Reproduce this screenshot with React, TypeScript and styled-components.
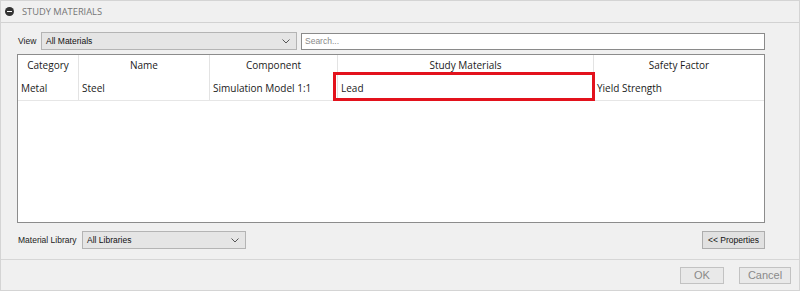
import React from 'react';
import styled, { createGlobalStyle } from 'styled-components';

const GlobalStyle = createGlobalStyle`
  html, body {
    margin: 0;
    padding: 0;
    background: #f0f0f0;
  }
  * {
    box-sizing: border-box;
  }
`;

const Panel = styled.div`
  width: 800px;
  height: 291px;
  background: #f0f0f0;
  border: 1px solid #d4d4d4;
  display: flex;
  flex-direction: column;
  font-family: 'Open Sans', 'Noto Sans', sans-serif;
`;

const TitleBar = styled.div`
  height: 22px;
  flex: none;
  display: flex;
  align-items: center;
  gap: 8px;
  padding-left: 4px;
  border-bottom: 1px solid #d2d2d2;
`;

const CollapseIcon = styled.span`
  width: 9px;
  height: 9px;
  border-radius: 50%;
  background: #333;
  position: relative;
  &::after {
    content: '';
    position: absolute;
    left: 2px;
    right: 2px;
    top: 4px;
    height: 1px;
    background: #fff;
  }
`;

const Title = styled.span`
  font-size: 9.3px;
  color: #757575;
`;

const Body = styled.div`
  flex: 1;
  display: flex;
  flex-direction: column;
  padding: 9px 34px 0 16px;
`;

const Row = styled.div<{ $top?: number }>`
  display: flex;
  align-items: center;
  margin-top: ${({ $top }) => $top ?? 0}px;
`;

const SmallLabel = styled.span<{ $width: number }>`
  width: ${({ $width }) => $width}px;
  flex: none;
  font-family: 'Liberation Sans', Arial, sans-serif;
  font-size: 8.5px;
  color: #222;
  padding-left: 1px;
`;

const Dropdown = styled.div<{ $width: number }>`
  width: ${({ $width }) => $width}px;
  height: 18px;
  flex: none;
  display: flex;
  align-items: center;
  justify-content: space-between;
  padding: 0 6px 0 4px;
  background: #e5e5e5;
  border: 1px solid #b4b4b4;
  font-family: 'Liberation Sans', Arial, sans-serif;
  font-size: 8.5px;
  color: #111;
`;

const SearchBox = styled.div`
  flex: 1;
  height: 17px;
  margin-left: 4px;
  display: flex;
  align-items: center;
  padding-left: 3px;
  background: #fff;
  border: 1px solid #8a8a8a;
  font-family: 'Liberation Sans', Arial, sans-serif;
  font-size: 8.5px;
  color: #8a8a8a;
`;

const Table = styled.div`
  margin-top: 4px;
  height: 169px;
  background: #fff;
  border: 1px solid #8c8c8c;
  position: relative;
`;

const Grid = styled.div`
  display: grid;
  grid-template-columns: 61px 131px 128px 256px 1fr;
  border-bottom: 1px solid #e6e6e6;
`;

const HeadCell = styled.div<{ $last?: boolean }>`
  height: 20px;
  display: flex;
  align-items: center;
  justify-content: center;
  font-size: 10px;
  color: #1a1a1a;
  border-right: ${({ $last }) => ($last ? 'none' : '1px solid #e3e3e3')};
`;

const Cell = styled.div<{ $last?: boolean }>`
  height: 25px;
  display: flex;
  align-items: center;
  padding-left: 3px;
  font-size: 10px;
  color: #1a1a1a;
  border-right: ${({ $last }) => ($last ? 'none' : '1px solid #e3e3e3')};
`;

const Highlight = styled.div`
  position: absolute;
  left: 315px;
  top: 17px;
  width: 262px;
  height: 29px;
  border: 3px solid #e3121c;
  pointer-events: none;
`;

const PropertiesButton = styled.div`
  margin-left: auto;
  width: 63px;
  height: 18px;
  display: flex;
  align-items: center;
  justify-content: center;
  background: #e1e1e1;
  border: 1px solid #adadad;
  font-family: 'Liberation Sans', Arial, sans-serif;
  font-size: 8.5px;
  color: #111;
`;

const Footer = styled.div`
  margin-top: auto;
  height: 31px;
  flex: none;
  display: flex;
  align-items: center;
  justify-content: flex-end;
  gap: 15px;
  padding-right: 8px;
  border-top: 1px solid #d6d6d6;
`;

const FooterButton = styled.div<{ $width: number }>`
  width: ${({ $width }) => $width}px;
  height: 17px;
  display: flex;
  align-items: center;
  justify-content: center;
  background: #e9e9e9;
  border: 1px solid #c2c2c2;
  font-family: 'Liberation Sans', Arial, sans-serif;
  font-size: 11px;
  color: #8a8a8a;
`;

const Chevron = () => (
  <svg width="8" height="5" viewBox="0 0 8 5">
    <path d="M0.5 0.5 L4 4 L7.5 0.5" fill="none" stroke="#555" strokeWidth="1" />
  </svg>
);

const columns = ['Category', 'Name', 'Component', 'Study Materials', 'Safety Factor'];
const rows = [['Metal', 'Steel', 'Simulation Model 1:1', 'Lead', 'Yield Strength']];

const App: React.FC = () => {
  return (
    <>
      <GlobalStyle />
      <Panel>
        <TitleBar>
          <CollapseIcon />
          <Title>STUDY MATERIALS</Title>
        </TitleBar>
        <Body>
          <Row $top={0}>
            <SmallLabel $width={24}>View</SmallLabel>
            <Dropdown $width={256}>
              <span>All Materials</span>
              <Chevron />
            </Dropdown>
            <SearchBox>Search...</SearchBox>
          </Row>
          <Table>
            <Grid>
              {columns.map((c, i) => (
                <HeadCell key={c} $last={i === columns.length - 1}>
                  {c}
                </HeadCell>
              ))}
              {rows.map((r) =>
                r.map((v, i) => (
                  <Cell key={v} $last={i === r.length - 1}>
                    {v}
                  </Cell>
                ))
              )}
            </Grid>
            <Highlight />
          </Table>
          <Row $top={8}>
            <SmallLabel $width={65}>Material Library</SmallLabel>
            <Dropdown $width={164}>
              <span>All Libraries</span>
              <Chevron />
            </Dropdown>
            <PropertiesButton>&lt;&lt; Properties</PropertiesButton>
          </Row>
        </Body>
        <Footer>
          <FooterButton $width={44}>OK</FooterButton>
          <FooterButton $width={52}>Cancel</FooterButton>
        </Footer>
      </Panel>
    </>
  );
};

export default App;
